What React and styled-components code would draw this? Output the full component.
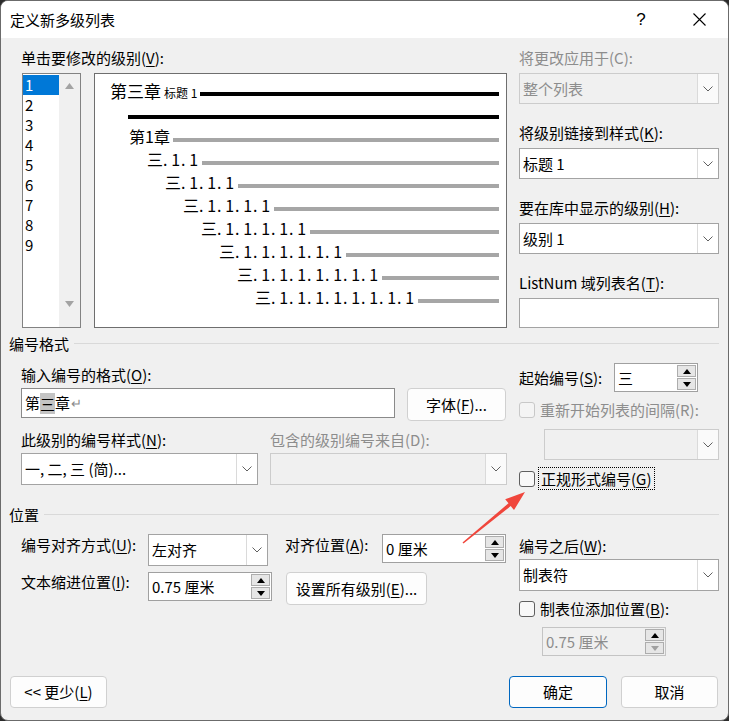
import React from 'react';
import styled, { createGlobalStyle } from 'styled-components';

const GlobalStyle = createGlobalStyle`
  * { box-sizing: border-box; }
  body {
    margin: 0;
    background: #2b2b2b;
    font-family: "Noto Sans CJK SC", "Noto Sans", sans-serif;
  }
`;

const Window = styled.div`
  position: relative;
  width: 729px;
  height: 721px;
  background: #f0f0f0;
  border: 1px solid #6b6b6b;
  border-radius: 8px;
  overflow: hidden;
  display: flex;
  flex-direction: column;
  font-size: 15px;
  line-height: 20px;
  color: #000;
`;

const TitleBar = styled.div`
  height: 37px;
  flex: none;
  background: #fff;
  display: flex;
  align-items: center;
  padding-left: 9px;
`;

const Title = styled.div`
  flex: 1;
  font-size: 15px;
`;

const CaptionButton = styled.div`
  width: 58px;
  height: 37px;
  display: flex;
  align-items: center;
  justify-content: center;
  font-size: 17px;
  font-family: "Liberation Sans", sans-serif;
`;

const Body = styled.div`
  padding: 10px 8px 0 20px;
  display: grid;
  grid-template-columns: 486px 200px;
  column-gap: 12px;
  align-items: start;
`;

const U = styled.span`
  text-decoration: underline;
  text-underline-offset: 2px;
`;

const Label = styled.div`
  height: 20px;
  white-space: nowrap;
  color: ${p => (p.$disabled ? '#8d8d8d' : '#000')};
  margin-top: ${p => p.$mt || 0}px;
`;

const Column = styled.div`
  display: flex;
  flex-direction: column;
  margin-top: ${p => p.$mt || 0}px;
`;

const FieldGroup = styled.div`
  display: flex;
  flex-direction: column;
  gap: 5px;
  margin-bottom: ${p => p.$mb || 0}px;
`;

const PreviewRow = styled.div`
  display: flex;
  gap: 13px;
  margin-top: 5px;
  margin-left: 1px;
`;

const LevelList = styled.div`
  display: flex;
  width: 59px;
  height: 255px;
  border: 1px solid #828282;
  background: #fff;
`;

const LevelItems = styled.div`
  width: 36px;
  padding-top: 1px;
`;

const LevelItem = styled.div`
  height: 20px;
  padding-left: 2px;
  background: ${p => (p.$selected ? '#0078d7' : 'transparent')};
  color: ${p => (p.$selected ? '#fff' : '#000')};
`;

const ScrollTrack = styled.div`
  width: 21px;
  background: #f0f0f0;
  display: flex;
  flex-direction: column;
  justify-content: space-between;
  padding: 2px 0 13px;
`;

const ScrollArrow = styled.div`
  height: 20px;
  display: flex;
  align-items: center;
  justify-content: center;
`;

const Preview = styled.div`
  width: 413px;
  height: 255px;
  border: 1px solid #6e6e6e;
  background: #fff;
  padding-top: 5px;
`;

const PRow = styled.div`
  display: flex;
  align-items: center;
  height: 23px;
  padding-left: ${p => p.$indent}px;
  padding-right: 7px;
  font-size: 16px;
  line-height: 23px;
  white-space: nowrap;
`;

const PLine = styled.div`
  flex: 1;
  height: 4px;
  margin-left: ${p => (p.$flush ? 0 : 3)}px;
  margin-top: 6px;
  background: ${p => (p.$dark ? '#000' : '#a6a6a6')};
`;

const BigText = styled.span`
  font-size: 17px;
`;

const SmallText = styled.span`
  font-size: 12px;
  margin-left: 3px;
  margin-top: 3px;
`;

const Seg = styled.span`
  display: inline-block;
  width: 18px;
  text-align: right;
  padding-right: 1px;
`;

const ComboBox = styled.div`
  display: flex;
  flex: none;
  width: ${p => p.$w}px;
  height: ${p => p.$h || 31}px;
  margin-left: ${p => p.$ml || 0}px;
  margin-top: ${p => p.$mt || 0}px;
  border: 1px solid ${p => (p.$disabled ? '#cccccc' : '#a3a3a3')};
  background: ${p => (p.$disabled ? '#f0f0f0' : '#fff')};
  color: ${p => (p.$disabled ? '#8d8d8d' : '#000')};
`;

const ComboText = styled.div`
  flex: 1;
  display: flex;
  align-items: center;
  padding-left: 3px;
  white-space: nowrap;
  overflow: hidden;
`;

const ComboArrow = styled.div`
  width: 21px;
  flex: none;
  display: flex;
  align-items: center;
  justify-content: center;
  border-left: 1px solid #dadada;
  background: ${p => (p.$disabled ? '#fafafa' : '#fff')};
`;

const TextBox = styled.div`
  width: ${p => p.$w}px;
  height: 30px;
  border: 1px solid ${p => p.$border || '#8a8a8a'};
  background: #fff;
  display: flex;
  align-items: center;
  padding-left: 3px;
  white-space: nowrap;
`;

const Selected = styled.span`
  display: inline-block;
  background: #c4c4c4;
  line-height: 21px;
`;

const ReturnMark = styled.span`
  color: #8a8a8a;
  font-size: 13px;
  margin-left: 1px;
`;

const SpinBox = styled.div`
  display: flex;
  flex: none;
  width: ${p => p.$w}px;
  height: 29px;
  margin-left: ${p => p.$ml || 0}px;
  margin-top: ${p => p.$mt || 0}px;
  border: 1px solid ${p => (p.$disabled ? '#c4c4c4' : '#a0a0a0')};
  background: ${p => (p.$disabled ? '#f0f0f0' : '#fff')};
  color: ${p => (p.$disabled ? '#8d8d8d' : '#000')};
`;

const SpinText = styled.div`
  flex: 1;
  display: flex;
  align-items: center;
  padding-left: 3px;
  white-space: nowrap;
`;

const SpinButtons = styled.div`
  width: 21px;
  display: flex;
  flex-direction: column;
  gap: 1px;
  padding: 1px;
`;

const SpinButton = styled.div`
  flex: 1;
  border: 1px solid #adadad;
  background: #e6e6e6;
  display: flex;
  align-items: center;
  justify-content: center;
`;

const PushButton = styled.div`
  flex: none;
  width: ${p => p.$w}px;
  height: ${p => p.$h || 33}px;
  margin-left: ${p => p.$ml || 0}px;
  border: 1px solid ${p => (p.$default ? '#0067c0' : '#d0d0d0')};
  border-radius: 4px;
  background: #fdfdfd;
  display: flex;
  align-items: center;
  justify-content: center;
  white-space: nowrap;
`;

const Row = styled.div`
  display: flex;
  align-items: ${p => p.$align || 'flex-start'};
  margin-top: ${p => p.$mt || 0}px;
`;

const RowLabel = styled.div`
  flex: none;
  width: ${p => p.$w}px;
  margin-left: ${p => p.$ml || 0}px;
  padding-top: ${p => p.$pt || 0}px;
  white-space: nowrap;
`;

const TwoCols = styled.div`
  display: grid;
  grid-template-columns: 237px 237px;
  column-gap: 12px;
  row-gap: 3px;
  margin-top: 9px;
`;

const SectionHeader = styled.div`
  grid-column: 1 / -1;
  margin-left: -12px;
  margin-top: ${p => p.$mt}px;
  height: 20px;
  display: flex;
  align-items: center;
  gap: 5px;
  &::after {
    content: "";
    flex: 1;
    height: 1px;
    background: #d9d9d9;
    margin-top: -2px;
  }
`;

const CheckRow = styled.div`
  display: flex;
  align-items: center;
  gap: ${p => p.$gap || 5}px;
  height: ${p => p.$h || 20}px;
  margin-top: ${p => p.$mt || 0}px;
  color: ${p => (p.$disabled ? '#8d8d8d' : '#000')};
  white-space: nowrap;
`;

const CheckBox = styled.span`
  flex: none;
  width: 16px;
  height: 16px;
  border: 1px solid ${p => (p.$disabled ? '#c8c8c8' : '#5f5f5f')};
  border-radius: 3px;
  background: ${p => (p.$disabled ? '#f4f4f4' : '#f8f8f8')};
`;

const FocusLabel = styled.span`
  height: 23px;
  line-height: 21px;
  padding: 0 2px;
  border: 1px dotted #000;
`;

const Footer = styled.div`
  margin-top: auto;
  display: flex;
  align-items: center;
  padding: 0 10px 12px 9px;
`;

const Spacer = styled.div`
  flex: 1;
`;

const Overlay = styled.svg`
  position: absolute;
  left: -1px;
  top: -1px;
  pointer-events: none;
`;

const Chevron = () => (
  <svg width="10" height="6" viewBox="0 0 10 6">
    <polyline points="0.5,0.5 5,5 9.5,0.5" fill="none" stroke="#606060" strokeWidth="1" />
  </svg>
);

const Tri = ({ down, color = '#000' }) => (
  <svg width="8" height="5" viewBox="0 0 8 5">
    <path d={down ? 'M0 0 L8 0 L4 5 Z' : 'M0 5 L8 5 L4 0 Z'} fill={color} />
  </svg>
);

const Combo = ({ w, h, ml, mt, disabled, children }) => (
  <ComboBox $w={w} $h={h} $ml={ml} $mt={mt} $disabled={disabled}>
    <ComboText>{children}</ComboText>
    <ComboArrow $disabled={disabled}>
      <Chevron />
    </ComboArrow>
  </ComboBox>
);

const Spin = ({ w, ml, mt, disabled, children }) => (
  <SpinBox $w={w} $ml={ml} $mt={mt} $disabled={disabled}>
    <SpinText>{children}</SpinText>
    <SpinButtons>
      <SpinButton><Tri /></SpinButton>
      <SpinButton><Tri down color={disabled ? '#a0a0a0' : '#000'} /></SpinButton>
    </SpinButtons>
  </SpinBox>
);

const Numbered = ({ count }) => (
  <span>
    三{Array.from({ length: count }).map((_, i) => <Seg key={i}>.&nbsp;1</Seg>)}
  </span>
);

const levels = [1, 2, 3, 4, 5, 6, 7, 8, 9];

export default function App() {
  return (
    <>
      <GlobalStyle />
      <Window>
        <TitleBar>
          <Title>定义新多级列表</Title>
          <CaptionButton>?</CaptionButton>
          <CaptionButton>
            <svg width="13" height="13" viewBox="0 0 13 13">
              <path d="M0.5 0.5 L12.5 12.5 M12.5 0.5 L0.5 12.5" stroke="#000" strokeWidth="1.1" />
            </svg>
          </CaptionButton>
        </TitleBar>

        <Body>
          <Column>
            <Label>单击要修改的级别(<U>V</U>):</Label>
            <PreviewRow>
              <LevelList>
                <LevelItems>
                  {levels.map(n => (
                    <LevelItem key={n} $selected={n === 1}>{n}</LevelItem>
                  ))}
                </LevelItems>
                <ScrollTrack>
                  <ScrollArrow>
                    <svg width="9" height="6" viewBox="0 0 9 6"><path d="M0 6 L4.5 0 L9 6 Z" fill="#a3a3a3" /></svg>
                  </ScrollArrow>
                  <ScrollArrow>
                    <svg width="9" height="6" viewBox="0 0 9 6"><path d="M0 0 L4.5 6 L9 0 Z" fill="#a3a3a3" /></svg>
                  </ScrollArrow>
                </ScrollTrack>
              </LevelList>
              <Preview>
                <PRow $indent={15}>
                  <BigText>第三章</BigText>
                  <SmallText>标题 1</SmallText>
                  <PLine $dark />
                </PRow>
                <PRow $indent={33}>
                  <PLine $dark $flush />
                </PRow>
                <PRow $indent={34}>
                  <span>第1章</span>
                  <PLine />
                </PRow>
                {[2, 3, 4, 5, 6, 7, 8].map((c, i) => (
                  <PRow key={c} $indent={52 + i * 18}>
                    <Numbered count={c} />
                    <PLine />
                  </PRow>
                ))}
              </Preview>
            </PreviewRow>
          </Column>

          <Column>
            <FieldGroup $mb={19}>
              <Label $disabled>将更改应用于(C):</Label>
              <Combo w={200} disabled>整个列表</Combo>
            </FieldGroup>
            <FieldGroup $mb={19}>
              <Label>将级别链接到样式(<U>K</U>):</Label>
              <Combo w={200}>标题 1</Combo>
            </FieldGroup>
            <FieldGroup $mb={19}>
              <Label>要在库中显示的级别(<U>H</U>):</Label>
              <Combo w={200}>级别 1</Combo>
            </FieldGroup>
            <FieldGroup>
              <Label>ListNum 域列表名(<U>T</U>):</Label>
              <TextBox $w={200} $border="#a3a3a3" />
            </FieldGroup>
          </Column>

          <SectionHeader $mt={6}>编号格式</SectionHeader>

          <Column $mt={11}>
            <Label>输入编号的格式(<U>O</U>):</Label>
            <Row $mt={3}>
              <TextBox $w={374}>
                第<Selected>三</Selected>章<ReturnMark>↵</ReturnMark>
              </TextBox>
              <PushButton $w={99} $ml={12}>字体(<U>F</U>)...</PushButton>
            </Row>
            <TwoCols>
              <Label>此级别的编号样式(<U>N</U>):</Label>
              <Label $disabled>包含的级别编号来自(D):</Label>
              <Combo w={237} h={32}>一, 二, 三 (简)...</Combo>
              <Combo w={237} h={32} disabled />
            </TwoCols>
          </Column>

          <Column $mt={9}>
            <Row $align="center">
              <RowLabel $w={95}>起始编号(<U>S</U>):</RowLabel>
              <Spin w={84}>三</Spin>
            </Row>
            <CheckRow $mt={8} $disabled>
              <CheckBox $disabled />
              <span>重新开始列表的间隔(R):</span>
            </CheckRow>
            <Combo w={175} ml={25} mt={9} disabled />
            <CheckRow $mt={7} $h={23} $gap={3}>
              <CheckBox />
              <FocusLabel>正规形式编号(<U>G</U>)</FocusLabel>
            </CheckRow>
          </Column>

          <SectionHeader $mt={15}>位置</SectionHeader>

          <Column $mt={9}>
            <Row>
              <RowLabel $w={127} $pt={1}>编号对齐方式(<U>U</U>):</RowLabel>
              <Combo w={120} h={32}>左对齐</Combo>
              <RowLabel $w={97} $ml={17} $pt={1}>对齐位置(<U>A</U>):</RowLabel>
              <Spin w={124}>0 厘米</Spin>
            </Row>
            <Row $mt={6}>
              <RowLabel $w={127}>文本缩进位置(<U>I</U>):</RowLabel>
              <Spin w={124}>0.75 厘米</Spin>
              <PushButton $w={141} $ml={14}>设置所有级别(<U>E</U>)...</PushButton>
            </Row>
          </Column>

          <Column $mt={9}>
            <Label $mt={2}>编号之后(<U>W</U>):</Label>
            <Combo w={200} h={32} mt={3}>制表符</Combo>
            <CheckRow $mt={8}>
              <CheckBox />
              <span>制表位添加位置(<U>B</U>):</span>
            </CheckRow>
            <Spin w={124} ml={23} mt={8} disabled>0.75 厘米</Spin>
          </Column>
        </Body>

        <Footer>
          <PushButton $w={97} $h={32}>&lt;&lt; 更少(<U>L</U>)</PushButton>
          <Spacer />
          <PushButton $w={98} $h={32} $default>确定</PushButton>
          <PushButton $w={97} $h={32} $ml={14}>取消</PushButton>
        </Footer>

        <Overlay width="729" height="721" viewBox="0 0 729 721">
          <polygon
            points="463.5,543.6 510.7,506.1 514,510.1 525,492 505.2,499.3 508.5,503.3 462.5,542.4"
            fill="#f0463c"
          />
        </Overlay>
      </Window>
    </>
  );
}
